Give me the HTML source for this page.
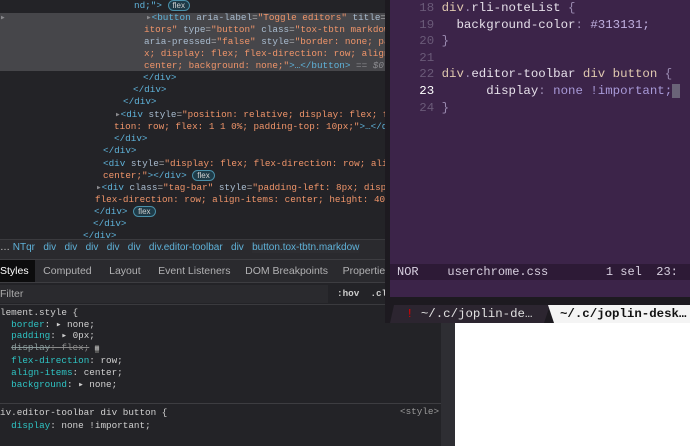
<!DOCTYPE html><html><head><style>
*{margin:0;padding:0;box-sizing:border-box}
body{width:690px;height:446px;overflow:hidden;background:#232327;position:relative;font-family:"Liberation Mono",monospace}
.m{position:absolute;white-space:pre;font-size:9.3px;line-height:12.2px;color:#b1b1b3}
.l{position:absolute;white-space:pre;font-size:9.3px;line-height:12.2px;color:#b1b1b3}
.t{color:#5fb2d9}.a{color:#a9bccf}.v{color:#f0956a}.g{color:#8a8a8e}
.fl{display:inline-block;border:1px solid #4a8fa8;border-radius:7px;background:#1e3a47;color:#d0d0d0;font-size:8px;line-height:9px;padding:0 4px;font-family:"Liberation Sans",sans-serif}
.s{font-family:"Liberation Sans",sans-serif;position:absolute;white-space:nowrap}
.p{color:#2ec3c3}
</style></head><body>
<div style="position:absolute;left:0;top:13px;width:390px;height:58px;background:#46464a"></div>
<div class="l" style="left:134px;top:0"><span class="t">nd;"&gt;</span> <span class="fl">flex</span></div>
<div class="l g" style="left:0;top:12px">▸</div>
<div class="l" style="left:146px;top:12px"><span class="g">▸</span><span class="t">&lt;button</span> <span class="a">aria-label</span>=<span class="v">"Toggle editors"</span> <span class="a">title</span>=</div>
<div class="l" style="left:144px;top:24px"><span class="v">itors"</span> <span class="a">type</span>=<span class="v">"button"</span> <span class="a">class</span>=<span class="v">"tox-tbtn markdow</span></div>
<div class="l" style="left:144px;top:36px"><span class="a">aria-pressed</span>=<span class="v">"false"</span> <span class="a">style</span>=<span class="v">"border: none; pa</span></div>
<div class="l" style="left:144px;top:48px"><span class="v">x; display: flex; flex-direction: row; align</span></div>
<div class="l" style="left:144px;top:60px"><span class="v">center; background: none;"</span><span class="t">&gt;…&lt;/button&gt;</span> <span class="g">== <i>$0</i></span></div>
<div class="l t" style="left:143px;top:72px">&lt;/div&gt;</div>
<div class="l t" style="left:133px;top:84px">&lt;/div&gt;</div>
<div class="l t" style="left:123px;top:96px">&lt;/div&gt;</div>
<div class="l" style="left:115px;top:109px"><span class="g">▸</span><span class="t">&lt;div</span> <span class="a">style</span>=<span class="v">"position: relative; display: flex; f</span></div>
<div class="l" style="left:114px;top:121px"><span class="v">tion: row; flex: 1 1 0%; padding-top: 10px;"</span><span class="t">&gt;…&lt;/di</span></div>
<div class="l t" style="left:114px;top:133px">&lt;/div&gt;</div>
<div class="l t" style="left:103px;top:145px">&lt;/div&gt;</div>
<div class="l" style="left:103px;top:158px"><span class="t">&lt;div</span> <span class="a">style</span>=<span class="v">"display: flex; flex-direction: row; ali</span></div>
<div class="l" style="left:103px;top:170px"><span class="v">center;"</span><span class="t">&gt;&lt;/div&gt;</span> <span class="fl">flex</span></div>
<div class="l" style="left:96px;top:182px"><span class="g">▸</span><span class="t">&lt;div</span> <span class="a">class</span>=<span class="v">"tag-bar"</span> <span class="a">style</span>=<span class="v">"padding-left: 8px; disp</span></div>
<div class="l" style="left:95px;top:194px"><span class="v">flex-direction: row; align-items: center; height: 40p</span></div>
<div class="l" style="left:94px;top:206px"><span class="t">&lt;/div&gt;</span> <span class="fl">flex</span></div>
<div class="l t" style="left:93px;top:218px">&lt;/div&gt;</div>
<div class="l t" style="left:83px;top:230px">&lt;/div&gt;</div>
<div style="position:absolute;left:0;top:239px;width:390px;height:20px;background:#2a2a2e;border-top:1px solid #3a3a3e"></div>
<div class="s" style="left:0;top:242px;font-size:10px;color:#5fb2d9"><span style="color:#ccc">…</span> NTqr&nbsp;&nbsp;&nbsp;div&nbsp;&nbsp;&nbsp;div&nbsp;&nbsp;&nbsp;div&nbsp;&nbsp;&nbsp;div&nbsp;&nbsp;&nbsp;div&nbsp;&nbsp;&nbsp;div.editor-toolbar&nbsp;&nbsp;&nbsp;div&nbsp;&nbsp;&nbsp;<span style="background:#2d2d31">button.tox-tbtn.markdow</span></div>
<div style="position:absolute;left:0;top:259px;width:390px;height:24px;background:#2a2a2e;border-top:1px solid #3d3d41;border-bottom:1px solid #3d3d41"></div>
<div style="position:absolute;left:0;top:260px;width:35px;height:22px;background:#0c0c0d"></div>
<div class="s" style="left:0;top:265px;font-size:10.5px;color:#b1b1b3"><span style="color:#fff">Styles</span>&nbsp;&nbsp;&nbsp;&nbsp;&nbsp;Computed&nbsp;&nbsp;&nbsp;&nbsp;&nbsp;&nbsp;Layout&nbsp;&nbsp;&nbsp;&nbsp;&nbsp;&nbsp;Event Listeners&nbsp;&nbsp;&nbsp;&nbsp;&nbsp;DOM Breakpoints&nbsp;&nbsp;&nbsp;&nbsp;&nbsp;Properties</div>
<div style="position:absolute;left:0;top:285px;width:328px;height:18px;background:#2a2a2e"></div>
<div class="s" style="left:0;top:288px;font-size:10.5px;color:#aaa">Filter</div>
<div class="m" style="left:337px;top:288px;color:#ccc;font-weight:bold">:hov  .cls</div>
<div style="position:absolute;left:0;top:304px;width:441px;height:1px;background:#3a3a3e"></div>
<div class="m" style="left:0;top:307px;line-height:11.6px;color:#d0d0d0">lement.style {
  <span class="p">border</span>: ▸ none;
  <span class="p">padding</span>: ▸ 0px;
  <span class="p" style="text-decoration:line-through;color:#8a9a9a">display</span><span style="text-decoration:line-through;color:#8a8a8a">: flex;</span> <span style="background:#555;color:#aaa;font-size:7px">▦</span>
  <span class="p">flex-direction</span>: row;
  <span class="p">align-items</span>: center;
  <span class="p">background</span>: ▸ none;</div>
<div style="position:absolute;left:0;top:403px;width:441px;height:1px;background:#3d3d41"></div>
<div class="m" style="left:0;top:406px;line-height:13px;color:#d0d0d0">iv.editor-toolbar div button {
  <span class="p">display</span>: none !important;</div>
<div class="m" style="left:400px;top:406px;color:#999">&lt;style&gt;</div>
<div style="position:absolute;left:385px;top:0;width:305px;height:323px;background:#1d1a20"></div>
<div style="position:absolute;left:390px;top:0;width:300px;height:297px;background:#3c2449"></div>
<div style="position:absolute;left:390px;top:264px;width:300px;height:16px;background:#2d1a36"></div>
<div class="m" style="left:397px;top:0;font-size:12.4px;line-height:16.6px;color:#e6e0ea"><span style="color:#6a5a78">   18 </span><span style="color:#e0c9b0">div</span><span style="color:#9a8ab0">.</span>rli-noteList <span style="color:#9a8ab0">{</span>
<span style="color:#6a5a78">   19 </span>  background-color<span style="color:#9a8ab0">:</span> <span style="color:#c0b0e0">#313131;</span>
<span style="color:#6a5a78">   20 </span><span style="color:#9a8ab0">}</span>
<span style="color:#6a5a78">   21</span>
<span style="color:#6a5a78">   22 </span><span style="color:#e0c9b0">div</span><span style="color:#9a8ab0">.</span>editor-toolbar <span style="color:#e0c9b0">div button</span> <span style="color:#9a8ab0">{</span>
<span style="color:#fff">   23 </span>      display<span style="color:#9a8ab0">:</span> <span style="color:#a89ad8">none !important;</span><span style="background:#6a6478"> </span>
<span style="color:#6a5a78">   24 </span><span style="color:#9a8ab0">}</span></div>
<div class="m" style="left:397px;top:265px;font-size:12px;line-height:14px;color:#d8d0e0">NOR    userchrome.css        1 sel  23:</div>
<div style="position:absolute;left:390px;top:305px;width:160px;height:18px;background:#2c2530;clip-path:polygon(4px 0,100% 0,calc(100% - 6px) 100%,0 100%)"></div>
<div class="m" style="left:406px;top:305px;font-size:12.4px;line-height:18px;color:#e0e0e0"><span style="color:#d00">!</span> ~/.c/joplin-de…</div>
<div style="position:absolute;left:548px;top:305px;width:142px;height:18px;background:#f4f4f4;clip-path:polygon(0 0,100% 0,100% 100%,6px 100%)"></div>
<div class="m" style="left:560px;top:305px;font-size:12.4px;line-height:18px;color:#111;font-weight:bold">~/.c/joplin-desk…</div>
<div style="position:absolute;left:441px;top:323px;width:14px;height:123px;background:#2e2e33"></div>
<div style="position:absolute;left:455px;top:323px;width:235px;height:123px;background:#fff"></div>
</body></html>
